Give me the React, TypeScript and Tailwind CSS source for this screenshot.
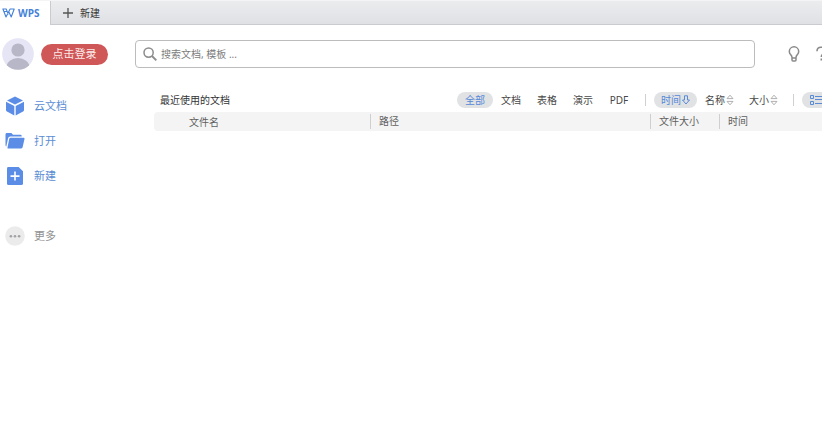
import { useState } from 'react';
import type { ReactNode } from 'react';

const filters = ['全部', '文档', '表格', '演示', 'PDF'];
const sorts = ['时间', '名称', '大小'];

function CubeIcon() {
    return (
        <svg viewBox="0 0 20 20" className="h-5 w-5" fill="#5b8de6">
            <path d="M10 0.6 18 4.6 10 8.6 2 4.6Z" />
            <path d="M1 5.8 9.3 10v9.4L2 15.6Q1 15 1 14Z" />
            <path d="M19 5.8 10.7 10v9.4L18 15.6Q19 15 19 14Z" />
        </svg>
    );
}

function FolderIcon() {
    return (
        <svg viewBox="0 0 20 20" className="h-5 w-5" fill="#5b8de6">
            <path d="M0.5 3.4Q0.5 2 1.9 2H6.4L8 3.7H15.4Q16.7 3.7 16.7 5V5.6H5.2Q3.5 5.6 3.1 7.2L1.3 15.5Q0.5 15 0.5 14Z" />
            <path d="M5.6 6.8H18.6Q19.8 6.8 19.5 8L17.6 16.2Q17.3 17.6 15.8 17.6H3.2Q2.2 17.6 2.5 16.4L4.2 8Q4.4 6.8 5.6 6.8Z" />
        </svg>
    );
}

function NewFileIcon() {
    return (
        <svg viewBox="0 0 20 20" className="h-5 w-5">
            <path d="M3.4 1H13.6L18 5.2V17.4Q18 19 16.4 19H3.6Q2 19 2 17.4V2.4Q2 1 3.4 1Z" fill="#5b8de6" />
            <path d="M10 5.6v9M5.5 10.1h9" stroke="#fff" strokeWidth="1.6" />
        </svg>
    );
}

function MoreIcon() {
    return (
        <svg viewBox="0 0 20 20" className="h-5 w-5">
            <circle cx="10" cy="10" r="9.8" fill="#ebebeb" />
            <g fill="#a2a2a6">
                <circle cx="5.9" cy="10.3" r="1.3" />
                <circle cx="10" cy="10.3" r="1.3" />
                <circle cx="14.1" cy="10.3" r="1.3" />
            </g>
        </svg>
    );
}

function SortIcon() {
    return (
        <svg viewBox="0 0 8 12" className="h-3 w-2 shrink-0" fill="none" stroke="#b0b0b0" strokeWidth="1" strokeLinejoin="round">
            <path d="M1 4.6 4 1.2 7 4.6Z" />
            <path d="M1 7.4 4 10.8 7 7.4Z" />
        </svg>
    );
}

function ArrowDownIcon() {
    return (
        <svg viewBox="0 0 8 12" className="h-3 w-2 shrink-0" fill="none" stroke="#5b8ad6" strokeWidth="1" strokeLinejoin="round">
            <path d="M2.5 1.8H5.5V6H7.5L4 10 0.5 6H2.5Z" />
        </svg>
    );
}

function NavItem({ icon, label, muted }: { icon: ReactNode; label: string; muted?: boolean }) {
    return (
        <button className={`flex h-[35px] items-center gap-2 pl-[5px] text-[11px] ${muted ? 'text-[#929292]' : 'text-[#5b8dd3]'}`}>
            {icon}
            <span className="pl-px">{label}</span>
        </button>
    );
}

function App() {
    const [filter, setFilter] = useState('全部');
    const [sort, setSort] = useState('时间');

    return (
        <div className="min-h-screen overflow-hidden bg-white font-['Noto_Sans','Noto_Sans_CJK_SC',sans-serif] text-[10px] leading-4 text-[#484848]">
            {/* Tab bar */}
            <div className="flex h-[25px] border-t border-[#f4f4f5]">
                <button className="flex w-[50px] items-center gap-[3px] pl-0.5 font-['Open_Sans',sans-serif] font-bold text-[#4481d8]">
                    <svg viewBox="0 0 13 10" className="h-[10px] w-[13px]" fill="none" stroke="#4481d8" strokeWidth="1.1" strokeLinejoin="round">
                        <path d="M0.4 1H4.2L6.3 6.4M0.9 1 4 9 8.1 1H12.2L9.2 9 6.7 3.6M2.3 3.5H4.7" />
                    </svg>
                    WPS
                </button>
                <div className="flex flex-1 border-b border-l border-[#c9cbce] bg-linear-to-b from-[#ebecee] to-[#dfe1e5]">
                    <button className="flex items-center gap-[7px] pl-3 text-[#333]">
                        <svg viewBox="0 0 10 10" className="h-[10px] w-[10px]" stroke="#555" strokeWidth="1.3">
                            <path d="M5 0v10M0 5h10" />
                        </svg>
                        新建
                    </button>
                </div>
            </div>

            {/* Account, search and help */}
            <header className="flex h-[58px] items-center">
                <div className="flex w-[135px] shrink-0 items-center gap-[7px] pl-0.5">
                    <svg viewBox="0 0 32 32" className="h-8 w-8">
                        <defs>
                            <clipPath id="avatar">
                                <circle cx="16" cy="16" r="15.8" />
                            </clipPath>
                        </defs>
                        <g clipPath="url(#avatar)">
                            <rect width="32" height="32" fill="#e5e5f5" />
                            <circle cx="16" cy="12" r="6.6" fill="#b7b7c8" />
                            <ellipse cx="16" cy="29" rx="11.5" ry="9" fill="#b7b7c8" />
                        </g>
                    </svg>
                    <button className="h-[21px] w-[67px] rounded-full bg-[#d05757] text-[11px] text-[#fbeaea]">点击登录</button>
                </div>
                <label className="flex h-7 flex-1 items-center gap-1 rounded border border-[#bcbcbc] pl-[7px]">
                    <svg viewBox="0 0 14 14" className="h-[14px] w-[14px]" fill="none" stroke="#8c8c8c" strokeWidth="1.5">
                        <circle cx="5.6" cy="5.6" r="4.6" />
                        <path d="M9 9 13.3 13.3" strokeWidth="1.9" />
                    </svg>
                    <input
                        type="text"
                        aria-label="搜索"
                        placeholder="搜索文档, 模板 ..."
                        className="min-w-0 flex-1 bg-transparent outline-none placeholder:text-[#7c7c7c]"
                    />
                </label>
                <div className="flex w-[67px] shrink-0 items-center gap-4 overflow-hidden pl-[33px]">
                    <button aria-label="提示" className="shrink-0">
                        <svg viewBox="0 0 12 16" className="h-4 w-3" fill="none" stroke="#8a8a8a" strokeWidth="1.5">
                            <path d="M4 11.5C4 9 1.3 8.6 1.3 5.5A4.7 4.7 0 0 1 10.7 5.5C10.7 8.6 8 9 8 11.5V14Q8 15 7 15H5Q4 15 4 14ZM4 12H8" />
                        </svg>
                    </button>
                    <button aria-label="帮助" className="shrink-0">
                        <svg viewBox="0 0 10 16" className="h-4 w-[10px]" fill="none" stroke="#8a8a8a" strokeWidth="1.6">
                            <path d="M1 5.2C1 2.6 2.7 1.2 5 1.2S9 2.7 9 4.8C9 7.6 5.3 7.8 5.3 11M5.3 12.6V14.4" />
                        </svg>
                    </button>
                </div>
            </header>

            <div className="flex">
                {/* Sidebar */}
                <nav className="flex w-[154px] shrink-0 flex-col pt-[5px]">
                    <NavItem icon={<CubeIcon />} label="云文档" />
                    <NavItem icon={<FolderIcon />} label="打开" />
                    <NavItem icon={<NewFileIcon />} label="新建" />
                    <div className="pt-[25px]">
                        <NavItem icon={<MoreIcon />} label="更多" muted />
                    </div>
                </nav>

                {/* Recent documents */}
                <main className="min-w-0 flex-1">
                    <div className="flex h-[29px] items-center pt-1">
                        <h1 className="flex-1 pl-1.5 text-[#333]">最近使用的文档</h1>
                        <div className="flex shrink-0">
                            {filters.map((name) => (
                                <button
                                    key={name}
                                    onClick={() => setFilter(name)}
                                    className={`h-4 w-9 rounded-full ${filter === name ? 'bg-[#e1e2e4] text-[#5589d6]' : ''}`}
                                >
                                    {name}
                                </button>
                            ))}
                        </div>
                        <div className="mx-2 h-3 w-px bg-[#d0d0d0]" />
                        <div className="flex shrink-0 gap-px">
                            {sorts.map((name) => (
                                <button
                                    key={name}
                                    onClick={() => setSort(name)}
                                    className={`flex h-4 w-[43px] items-center justify-center gap-px rounded-full ${sort === name ? 'bg-[#e1e2e4] text-[#5589d6]' : ''}`}
                                >
                                    {name}
                                    {sort === name ? <ArrowDownIcon /> : <SortIcon />}
                                </button>
                            ))}
                        </div>
                        <div className="mx-2 h-3 w-px bg-[#d0d0d0]" />
                        <button aria-label="列表" className="flex h-4 w-5 shrink-0 items-center justify-end rounded-l-full bg-[#e1e2e4]">
                            <svg viewBox="0 0 12 10" className="h-[10px] w-3" fill="none" stroke="#5b8ad6">
                                <path d="M0.5 0.5H3.5V3.5H0.5ZM0.5 6.5H3.5V9.5H0.5Z" />
                                <path d="M5 1.5H12M5 4.5H12M5 8.5H12" />
                            </svg>
                        </button>
                    </div>
                    <table className="w-full table-fixed">
                        <thead>
                            <tr className="h-[19px] bg-[#f4f4f4] text-left text-[#606060]">
                                <th className="w-[216px] rounded-l-sm p-0 pl-[35px] font-normal">文件名</th>
                                <th className="p-0 font-normal">
                                    <div className="h-[15px] border-l border-[#cfcfcf] pl-2 leading-[15px]">路径</div>
                                </th>
                                <th className="w-[69px] p-0 font-normal">
                                    <div className="h-[15px] border-l border-[#cfcfcf] pl-2 leading-[15px]">文件大小</div>
                                </th>
                                <th className="w-[103px] p-0 font-normal">
                                    <div className="h-[15px] border-l border-[#cfcfcf] pl-2 leading-[15px]">时间</div>
                                </th>
                            </tr>
                        </thead>
                    </table>
                </main>
            </div>
        </div>
    );
}

export default App;
